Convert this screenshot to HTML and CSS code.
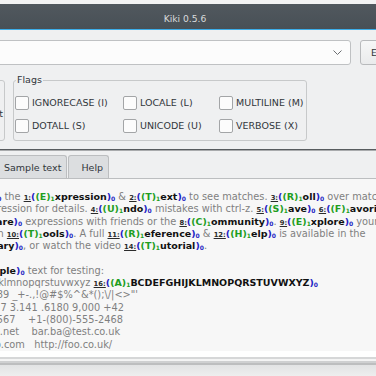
FILE: index.html
```html
<!DOCTYPE html>
<html lang="en">
<head>
<meta charset="utf-8">
<title>Kiki 0.5.6</title>
<link rel="stylesheet" href="styles.css">
</head>
<body>
<div class="window">
  <div class="screen-top"></div>
  <div class="titlebar"><span>Kiki 0.5.6</span></div>
  <div class="title-accent"></div>

  <div class="toolbar">
    <div class="combo">
      <svg class="chevron" width="9" height="5" viewBox="0 0 9 5"><polyline points="0.5,0.5 4.5,4.5 8.5,0.5" fill="none" stroke="#6b6e71" stroke-width="1"/></svg>
    </div>
    <div class="button">Evaluate</div>
  </div>

  <div class="options">
    <div class="groupbox-left"><span>Text</span></div>
    <fieldset class="flags">
      <legend>Flags</legend>
      <div class="flag-grid">
        <label class="flag"><span class="check"></span>IGNORECASE (I)</label>
        <label class="flag"><span class="check"></span>LOCALE (L)</label>
        <label class="flag"><span class="check"></span>MULTILINE (M)</label>
        <label class="flag"><span class="check"></span>DOTALL (S)</label>
        <label class="flag"><span class="check"></span>UNICODE (U)</label>
        <label class="flag"><span class="check"></span>VERBOSE (X)</label>
      </div>
    </fieldset>
  </div>

  <div class="splitter"></div>

  <div class="tabbar">
    <div class="tab">Sample text</div>
    <div class="tab">Help</div>
  </div>

  <div class="textview">
<div class="line"><b class="m"><u class="k">0:</u><i class="p0">(</i><i class="p1">(E)</i><sub class="s1">1</sub>dit<i class="p0">)</i><sub class="s0">0</sub></b> the <b class="m"><u class="k">1:</u><i class="p0">(</i><i class="p1">(E)</i><sub class="s1">1</sub>xpression<i class="p0">)</i><sub class="s0">0</sub></b> &amp; <b class="m"><u class="k">2:</u><i class="p0">(</i><i class="p1">(T)</i><sub class="s1">1</sub>ext<i class="p0">)</i><sub class="s0">0</sub></b> to see matches. <b class="m"><u class="k">3:</u><i class="p0">(</i><i class="p1">(R)</i><sub class="s1">1</sub>oll<i class="p0">)</i><sub class="s0">0</sub></b> over matches</div>
<div class="line">or the expression for details. <b class="m"><u class="k">4:</u><i class="p0">(</i><i class="p1">(U)</i><sub class="s1">1</sub>ndo<i class="p0">)</i><sub class="s0">0</sub></b> mistakes with ctrl-z. <b class="m"><u class="k">5:</u><i class="p0">(</i><i class="p1">(S)</i><sub class="s1">1</sub>ave<i class="p0">)</i><sub class="s0">0</sub></b> <b class="m"><u class="k">6:</u><i class="p0">(</i><i class="p1">(F)</i><sub class="s1">1</sub>avorites<i class="p0">)</i><sub class="s0">0</sub></b></div>
<div class="line">&amp; <b class="m"><u class="k">7:</u><i class="p0">(</i><i class="p1">(S)</i><sub class="s1">1</sub>hare<i class="p0">)</i><sub class="s0">0</sub></b> expressions with friends or the <b class="m"><u class="k">8:</u><i class="p0">(</i><i class="p1">(C)</i><sub class="s1">1</sub>ommunity<i class="p0">)</i><sub class="s0">0</sub></b>. <b class="m"><u class="k">9:</u><i class="p0">(</i><i class="p1">(E)</i><sub class="s1">1</sub>xplore<i class="p0">)</i><sub class="s0">0</sub></b> your</div>
<div class="line">results with <b class="m"><u class="k">10:</u><i class="p0">(</i><i class="p1">(T)</i><sub class="s1">1</sub>ools<i class="p0">)</i><sub class="s0">0</sub></b>. A full <b class="m"><u class="k">11:</u><i class="p0">(</i><i class="p1">(R)</i><sub class="s1">1</sub>eference<i class="p0">)</i><sub class="s0">0</sub></b> &amp; <b class="m"><u class="k">12:</u><i class="p0">(</i><i class="p1">(H)</i><sub class="s1">1</sub>elp<i class="p0">)</i><sub class="s0">0</sub></b> is available in the</div>
<div class="line"><b class="m"><u class="k">13:</u><i class="p0">(</i><i class="p1">(L)</i><sub class="s1">1</sub>ibrary<i class="p0">)</i><sub class="s0">0</sub></b>, or watch the video <b class="m"><u class="k">14:</u><i class="p0">(</i><i class="p1">(T)</i><sub class="s1">1</sub>utorial<i class="p0">)</i><sub class="s0">0</sub></b>.</div>
<div class="line"> </div>
<div class="line"><b class="m"><u class="k">15:</u><i class="p0">(</i><i class="p1">(S)</i><sub class="s1">1</sub>ample<i class="p0">)</i><sub class="s0">0</sub></b> text for testing:</div>
<div class="line">abcdefghijklmnopqrstuvwxyz <b class="m"><u class="k">16:</u><i class="p0">(</i><i class="p1">(A)</i><sub class="s1">1</sub>BCDEFGHIJKLMNOPQRSTUVWXYZ<i class="p0">)</i><sub class="s0">0</sub></b></div>
<div class="line">0123456789 _+-.,!@#$%^&amp;*();\/|&lt;&gt;"'</div>
<div class="line">12345 -98.7 3.141 .6180 9,000 +42</div>
<div class="line">555.123.4567    +1-(800)-555-2468</div>
<div class="line">foo@demo.net    bar.ba@test.co.uk</div>
<div class="line">www.demo.com   http://foo.co.uk/</div>
  </div>

  <div class="statusarea">
    <div class="strip-white"></div>
    <div class="strip-a"></div>
    <div class="strip-b"></div>
    <div class="strip-c"></div>
    <div class="strip-d"></div>
    <div class="strip-e"></div>
  </div>
</div>
</body>
</html>
```

FILE: styles.css
```css
* { box-sizing: border-box; }

html, body {
  margin: 0;
  padding: 0;
}

body {
  width: 376px;
  height: 376px;
  overflow: hidden;
  background: #eff0f1;
  font-family: "DejaVu Sans", "Noto Sans", sans-serif;
  font-size: 9.5px;
  color: #31363b;
}

.window {
  display: flex;
  flex-direction: column;
  height: 376px;
}

.screen-top {
  height: 4px;
  background: #f3f3f3;
}

.titlebar {
  height: 25px;
  background: linear-gradient(#51585e, #485056);
  color: #d9dbdc;
  display: flex;
  align-items: center;
  justify-content: center;
  padding: 3px 6px 0 0;
  font-size: 9.2px;
}

.title-accent {
  height: 1px;
  background: #3daee9;
}

.toolbar {
  display: flex;
  gap: 9px;
  padding-top: 10px;
  margin-left: -20px;
  margin-right: -64px;
}

.combo {
  flex: 1;
  height: 25px;
  border: 1px solid #bfc1c3;
  border-radius: 3px;
  background: #fcfcfc;
  display: flex;
  align-items: center;
  justify-content: flex-end;
  padding-right: 8px;
}

.chevron { display: block; }

.button {
  flex: 0 0 80px;
  height: 25px;
  border: 1px solid #b8babc;
  border-radius: 3px;
  background: linear-gradient(#f6f7f7, #eaebec);
  display: flex;
  align-items: center;
  padding-left: 10px;
  color: #31363b;
}

.options {
  display: flex;
  align-items: flex-start;
  gap: 8px;
  margin-top: 9px;
  margin-left: -40px;
}

.groupbox-left {
  width: 45px;
  height: 61px;
  margin-top: 6px;
  border: 1px solid #c7c9ca;
  border-radius: 3px;
  display: flex;
  align-items: center;
  justify-content: flex-end;
  padding: 5px 1px 0 0;
}

.flags {
  margin: 0;
  padding: 0 2px 3px 1px;
  border: 1px solid #c7c9ca;
  border-radius: 3px;
  min-width: 0;
}

.flags legend {
  padding: 0 1px;
  margin-left: 1px;
  line-height: 12px;
  color: #31363b;
}

.flag-grid {
  display: grid;
  grid-template-columns: 108px 96px auto;
  grid-auto-rows: 23px;
  margin-top: 5px;
}

.flag {
  display: flex;
  align-items: center;
  gap: 3px;
  white-space: nowrap;
}

.check {
  flex: none;
  width: 14px;
  height: 14px;
  border: 1px solid #a3a5a7;
  border-radius: 2px;
  background: #fcfcfc;
}

.splitter {
  height: 2px;
  margin-top: 8px;
  margin-bottom: 4px;
  background: linear-gradient(#585c5f 0 1px, #a9abad 1px 2px);
}

.tabbar {
  display: flex;
  gap: 1px;
  height: 24px;
  margin-left: -9px;
  border-bottom: 1px solid #bcbec0;
}

.tab {
  height: 23px;
  padding: 0 5px 0 12px;
  background: #dcdee0;
  border: 1px solid #bcbec0;
  border-bottom: none;
  border-radius: 3px 3px 0 0;
  display: flex;
  align-items: center;
  color: #31363b;
}

.textview {
  height: 172px;
  background: #f7f7f7;
  overflow: hidden;
  padding-top: 12px;
  margin-left: -53px;
  color: #7f7f7f;
  font-size: 9.8px;
  line-height: 12.3px;
}

.line {
  height: 12.3px;
  white-space: pre;
}

.m {
  font-weight: bold;
  font-size: 9.5px;
  color: #111111;
}

.m i {
  font-style: normal;
}

.k {
  font-size: 6.8px;
  color: #2b2b2b;
  text-decoration: underline;
}

.p0 { color: #1f1fc4; }
.p1 { color: #1f9e1f; }

sub {
  font-size: 6px;
  line-height: 0;
  vertical-align: -1px;
}

.s0 { color: #1f1fc4; }
.s1 { color: #1f9e1f; }

.statusarea {
  display: flex;
  flex-direction: column;
  flex: 1;
}

.strip-white { height: 6px; background: #ffffff; }
.strip-a { height: 2px; background: #d6d7d8; }
.strip-b { height: 2px; background: #f4f4f4; }
.strip-c { height: 2px; background: #cfd0d1; }
.strip-d { height: 2px; background: #bdbebf; }
.strip-e { flex: 1; background: linear-gradient(#e2e3e4, #eeeeee); }
```
